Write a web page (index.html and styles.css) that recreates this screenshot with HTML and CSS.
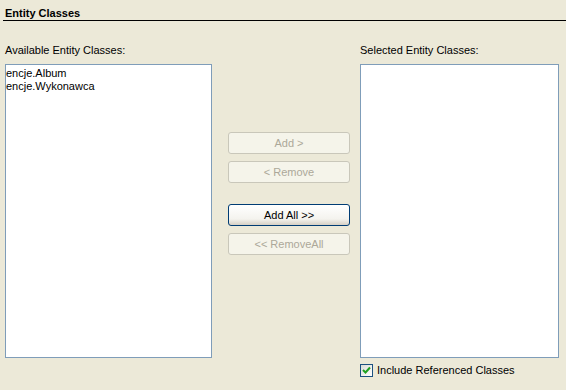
FILE: index.html
```html
<!DOCTYPE html>
<html lang="en">
<head>
    <meta charset="UTF-8">
    <title>Entity Classes</title>
<link rel="stylesheet" href="styles.css">
</head>
<body>
    <div class="header">
        <h1>Entity Classes</h1>
    </div>
    <div class="panel">
        <label class="cap">Available Entity Classes:</label>
        <div></div>
        <label class="cap">Selected Entity Classes:</label>

        <ul class="list">
            <li>encje.Album</li>
            <li>encje.Wykonawca</li>
        </ul>
        <div class="buttons">
            <button disabled>Add &gt;</button>
            <button disabled>&lt; Remove</button>
            <button class="gap">Add All &gt;&gt;</button>
            <button disabled>&lt;&lt; RemoveAll</button>
        </div>
        <ul class="list"></ul>

        <div></div>
        <div></div>
        <label class="check">
            <span class="box">
                <svg width="9" height="9" viewBox="0 0 9 9"><path d="M1 4 L3.5 6.5 L8 1.5" fill="none" stroke="#21A121" stroke-width="2"/></svg>
            </span>
            Include Referenced Classes
        </label>
    </div>
</body>
</html>
```

FILE: styles.css
```css
body {
    margin: 0;
    background-color: #ECE9D8;
    font-family: Tahoma, "Liberation Sans", Arial, sans-serif;
    font-size: 11px;
    color: #000;
    width: 566px;
    height: 390px;
    overflow: hidden;
}
.header {
    margin-left: 3px;
    height: 20px;
    border-bottom: 1px solid #000;
}
h1 {
    margin: 0;
    padding: 7px 0 0 2px;
    font-size: 11px;
    font-weight: bold;
    line-height: 12px;
}
.panel {
    display: grid;
    grid-template-columns: 207px 1fr 199px;
    grid-template-rows: 43px 294px auto;
    padding: 0 7px 0 5px;
}
.cap {
    align-self: end;
    padding-bottom: 7px;
    line-height: 13px;
}
.list {
    margin: 0;
    padding: 2px 1px 2px 0;
    list-style: none;
    background: #fff;
    border: 1px solid #7F9DB9;
    line-height: 13px;
}
.buttons {
    display: flex;
    flex-direction: column;
    gap: 7px;
    padding: 68px 0 0 16px;
}
button {
    width: 122px;
    height: 22px;
    padding: 0;
    font-family: inherit;
    font-size: 11px;
    color: #000;
    border: 1px solid #003C74;
    border-radius: 3px;
    background: linear-gradient(#fff, #F4F3EE 70%, #D6D0C5);
}
button:disabled {
    color: #ACA899;
    border-color: #C9C7BA;
    background: #F5F4EA;
}
.gap {
    margin-top: 14px;
}
.check {
    display: flex;
    align-items: center;
    gap: 4px;
    padding-top: 6px;
    line-height: 13px;
}
.box {
    width: 11px;
    height: 11px;
    border: 1px solid #1C5180;
    background: linear-gradient(135deg, #DCDCD7, #fff);
    display: flex;
    align-items: center;
    justify-content: center;
}
```
